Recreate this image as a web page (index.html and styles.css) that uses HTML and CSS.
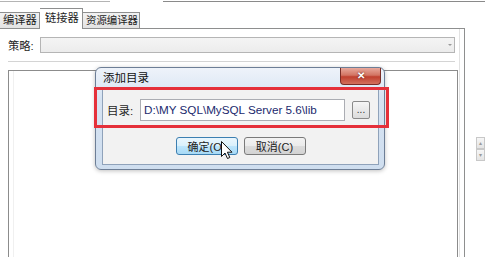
FILE: index.html
```html
<!DOCTYPE html>
<html lang="zh-CN">
<head>
    <meta charset="UTF-8">
    <title>链接器 - 添加目录</title>
    <link rel="stylesheet" href="styles.css">
</head>
<body>
    <div class="screen">
        <div class="topline">
            <span class="seg seg-a"></span>
            <span class="seg seg-b"></span>
        </div>

        <div class="tabs">
            <div class="tab">编译器</div>
            <div class="tab active">链接器</div>
            <div class="tab">资源编译器</div>
        </div>

        <div class="body">
            <div class="panel">
                <div class="row">
                    <span class="label">策略:</span>
                    <div class="combo"><span class="arrow"></span></div>
                </div>
                <div class="sep"></div>
                <div class="listbox"><div class="col"></div></div>
            </div>
            <div class="side">
                <div class="spin">
                    <span class="spin-btn">&#9652;</span>
                    <span class="spin-btn">&#9662;</span>
                </div>
            </div>
        </div>

        <!-- 添加目录 对话框 -->
        <div class="dialog">
            <div class="titlebar">
                <span class="title">添加目录</span>
                <span class="close">&#10005;</span>
            </div>
            <div class="client">
                <div class="dir-row">
                    <span class="label">目录:</span>
                    <div class="input">D:\MY SQL\MySQL Server 5.6\lib</div>
                    <button class="browse">...</button>
                </div>
                <div class="buttons">
                    <button class="btn btn-focus">确定(O)</button>
                    <button class="btn">取消(C)</button>
                </div>
            </div>
        </div>

        <div class="highlight"></div>

        <svg class="cursor" width="12" height="19" viewBox="0 0 12 19">
            <path d="M0.5 0.5 L0.5 15.5 L4 12 L6.5 17.5 L8.8 16.5 L6.4 11.2 L11 11.2 Z" fill="#fff" stroke="#111" stroke-width="1"/>
        </svg>
    </div>
</body>
</html>
```

FILE: styles.css
```css
* {
    box-sizing: border-box;
}
body {
    margin: 0;
    background-color: #ffffff;
    font-family: "Liberation Sans", "Noto Sans CJK SC", sans-serif;
    font-size: 11px;
    color: #1e1e1e;
}
.screen {
    position: relative;
    width: 485px;
    height: 257px;
    overflow: hidden;
    background-color: #ffffff;
}

/* top strip */
.topline {
    display: flex;
    height: 3px;
}
.seg {
    display: block;
    height: 2px;
    border-bottom: 1px solid #b4b4b4;
}
.seg-a {
    width: 110px;
}
.seg-b {
    width: 322px;
    margin-left: 53px;
    border-bottom-color: #8a8a8a;
}

/* tabs */
.tabs {
    display: flex;
    align-items: flex-end;
    height: 20px;
    margin-top: 5px;
}
.tab {
    height: 16px;
    padding: 0 2px;
    border: 1px solid #8e8f8f;
    border-bottom: none;
    border-left: none;
    background: linear-gradient(#f2f2f2, #e3e3e3);
    line-height: 15px;
    white-space: nowrap;
}
.tab:first-child {
    width: 40px;
    padding-left: 3px;
    font-size: 11.3px;
}
.tab.active {
    width: 43px;
    height: 21px;
    margin-bottom: -1px;
    padding-left: 5px;
    background: #ffffff;
    line-height: 19px;
    font-size: 11.3px;
    position: relative;
}
.tab:last-child {
    width: 57px;
    padding-left: 3px;
    font-size: 10.4px;
}

/* panel */
.body {
    display: flex;
    height: 229px;
}
.panel {
    width: 466px;
    padding: 8px 0 0 8px;
    border-top: 1px solid #8e8f8f;
    border-right: 1px solid #8e8f8f;
    background: linear-gradient(to left, transparent 4px, #e2e2e2 4px, #e2e2e2 5px, transparent 5px);
}
.row {
    display: flex;
    align-items: center;
    height: 16px;
}
.row .label {
    width: 32px;
    font-size: 11.3px;
}
.combo {
    position: relative;
    width: 415px;
    height: 16px;
    border: 1px solid #b5b5b5;
    background: linear-gradient(#f4f4f4, #ececec);
}
.arrow {
    position: absolute;
    right: 2px;
    top: 6px;
    border-left: 2px solid transparent;
    border-right: 2px solid transparent;
    border-top: 2px solid #9a9a9a;
}
.sep {
    width: 447px;
    height: 2px;
    margin-top: 8px;
    border-top: 1px solid #d4d4d4;
    border-bottom: 1px solid #ffffff;
}
.listbox {
    width: 450px;
    height: 200px;
    margin-top: 7px;
    padding-left: 4px;
    border: 1px solid #8c8c8c;
    background-color: #ffffff;
}
.col {
    width: 1px;
    height: 100%;
    background-color: #f0f0f0;
}
.side {
    flex: 1;
}
.spin {
    display: flex;
    flex-direction: column;
    width: 9px;
    margin: 109px 0 0 11px;
}
.spin-btn {
    height: 12px;
    border: 1px solid #c8c8c8;
    background: linear-gradient(#f6f6f6, #e4e4e4);
    color: #9a9a9a;
    font-size: 6px;
    line-height: 10px;
    text-align: center;
}

/* dialog */
.dialog {
    position: absolute;
    left: 95px;
    top: 67px;
    width: 290px;
    height: 103px;
    padding: 0 5px 5px 6px;
    border: 1px solid #6d7e96;
    border-radius: 6px;
    background: linear-gradient(#eef3fa, #d6e3f2 30%, #cfdeef);
    box-shadow: 0 1px 4px rgba(0, 0, 0, 0.25);
}
.titlebar {
    position: relative;
    height: 20px;
}
.title {
    display: block;
    padding-left: 1px;
    line-height: 20px;
    font-size: 11.5px;
    color: #111;
}
.close {
    position: absolute;
    right: -2px;
    top: 0;
    width: 41px;
    height: 17px;
    border: 1px solid #7a2d26;
    border-top: none;
    border-radius: 0 0 4px 4px;
    background: linear-gradient(#e9a99c, #d27463 45%, #c0402f 55%, #d3705c);
    color: #ffffff;
    font-size: 10px;
    font-weight: bold;
    line-height: 16px;
    text-align: center;
    text-shadow: 0 0 2px #5a1a14;
}
.client {
    height: 77px;
    padding: 10px 0 0 4px;
    border: 1px solid #8fa2ba;
    background-color: #f2f2f2;
}
.dir-row {
    display: flex;
    align-items: center;
    height: 22px;
}
.dir-row .label {
    width: 33px;
    font-size: 11.5px;
}
.input {
    width: 205px;
    height: 22px;
    padding-left: 3px;
    border: 1px solid #abadb3;
    background-color: #ffffff;
    font-size: 11.7px;
    line-height: 20px;
    color: #1c2a6e;
    white-space: nowrap;
    overflow: hidden;
}
.browse {
    width: 18px;
    height: 18px;
    margin-left: 7px;
    padding: 0;
    border: 1px solid #8a8a8a;
    border-radius: 2px;
    background: linear-gradient(#f6f6f6, #dcdcdc);
    font-family: "Liberation Sans", sans-serif;
    font-size: 10px;
    line-height: 10px;
    color: #333;
}
.buttons {
    display: flex;
    justify-content: center;
    gap: 6px;
    margin-top: 16px;
    padding-right: 4px;
}
.btn {
    width: 62px;
    height: 18px;
    padding: 0;
    border: 1px solid #7a7a7a;
    border-radius: 3px;
    background: linear-gradient(#f3f3f3, #ebebeb 50%, #dcdcdc 50%, #d3d3d3);
    font-family: "Liberation Sans", "Noto Sans CJK SC", sans-serif;
    font-size: 11px;
    color: #222;
}
.btn-focus {
    border-color: #3c7fb1;
    background: linear-gradient(#eaf6fd, #d9f0fc 50%, #bee6fd 50%, #a7d9f5);
}

/* red mark */
.highlight {
    position: absolute;
    left: 94px;
    top: 87px;
    width: 295px;
    height: 41px;
    border: 3px solid #e5303a;
}
.cursor {
    position: absolute;
    left: 221px;
    top: 141px;
}
```
